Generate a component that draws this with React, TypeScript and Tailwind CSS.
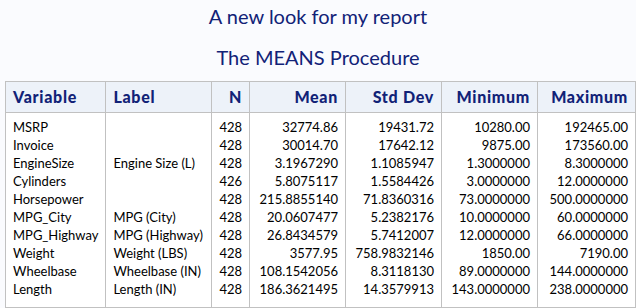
import React from "react";

const rows: string[][] = [
  ["MSRP", "", "428", "32774.86", "19431.72", "10280.00", "192465.00"],
  ["Invoice", "", "428", "30014.70", "17642.12", "9875.00", "173560.00"],
  ["EngineSize", "Engine Size (L)", "428", "3.1967290", "1.1085947", "1.3000000", "8.3000000"],
  ["Cylinders", "", "426", "5.8075117", "1.5584426", "3.0000000", "12.0000000"],
  ["Horsepower", "", "428", "215.8855140", "71.8360316", "73.0000000", "500.0000000"],
  ["MPG_City", "MPG (City)", "428", "20.0607477", "5.2382176", "10.0000000", "60.0000000"],
  ["MPG_Highway", "MPG (Highway)", "428", "26.8434579", "5.7412007", "12.0000000", "66.0000000"],
  ["Weight", "Weight (LBS)", "428", "3577.95", "758.9832146", "1850.00", "7190.00"],
  ["Wheelbase", "Wheelbase (IN)", "428", "108.1542056", "8.3118130", "89.0000000", "144.0000000"],
  ["Length", "Length (IN)", "428", "186.3621495", "14.3579913", "143.0000000", "238.0000000"],
];

const headers = ["Variable", "Label", "N", "Mean", "Std Dev", "Minimum", "Maximum"];
const widths = ["w-[99px]", "w-[106px]", "w-[36px]", "w-[96px]", "w-[96px]", "w-[96px]", "w-[98px]"];

export default function App() {
  return (
    <div
      className="w-[636px] h-[308px] bg-[#fafbfe] overflow-hidden"
      style={{ fontFamily: "Lato, 'Open Sans', sans-serif" }}
    >
      <div className="pt-[3px] text-center text-[20px] leading-[26px] text-[#112277]">A new look for my report</div>
      <div className="mt-[15px] text-center text-[20px] leading-[26px] text-[#112277]">The MEANS Procedure</div>
      <div className="pl-[5px] mt-[11px]">
        <table className="table-fixed border-collapse border border-[#c1c1c1] bg-white">
          <colgroup>
            {widths.map((w, i) => (
              <col key={i} className={w} />
            ))}
          </colgroup>
          <thead>
            <tr className="bg-[#edf2f9]">
              {headers.map((h, i) => (
                <th
                  key={h}
                  className={`h-[31px] border border-[#c1c1c1] px-[7px] font-black text-[16px] tracking-[0.7px] text-[#112277] whitespace-nowrap ${
                    i < 2 ? "text-left" : "text-right"
                  }`}
                >
                  {h}
                </th>
              ))}
            </tr>
          </thead>
          <tbody>
            {rows.map((r, ri) => (
              <tr key={ri}>
                {r.map((c, ci) => (
                  <td
                    key={ci}
                    className={`border-x border-[#c1c1c1] px-[7px] text-[13px] leading-[18px] text-black whitespace-nowrap ${
                      ci < 2 ? "text-left" : "text-right"
                    } ${ri === 0 ? "pt-[5px]" : ""} ${ri === rows.length - 1 ? "pb-[9px]" : ""}`}
                  >
                    {c}
                  </td>
                ))}
              </tr>
            ))}
          </tbody>
        </table>
      </div>
    </div>
  );
}
